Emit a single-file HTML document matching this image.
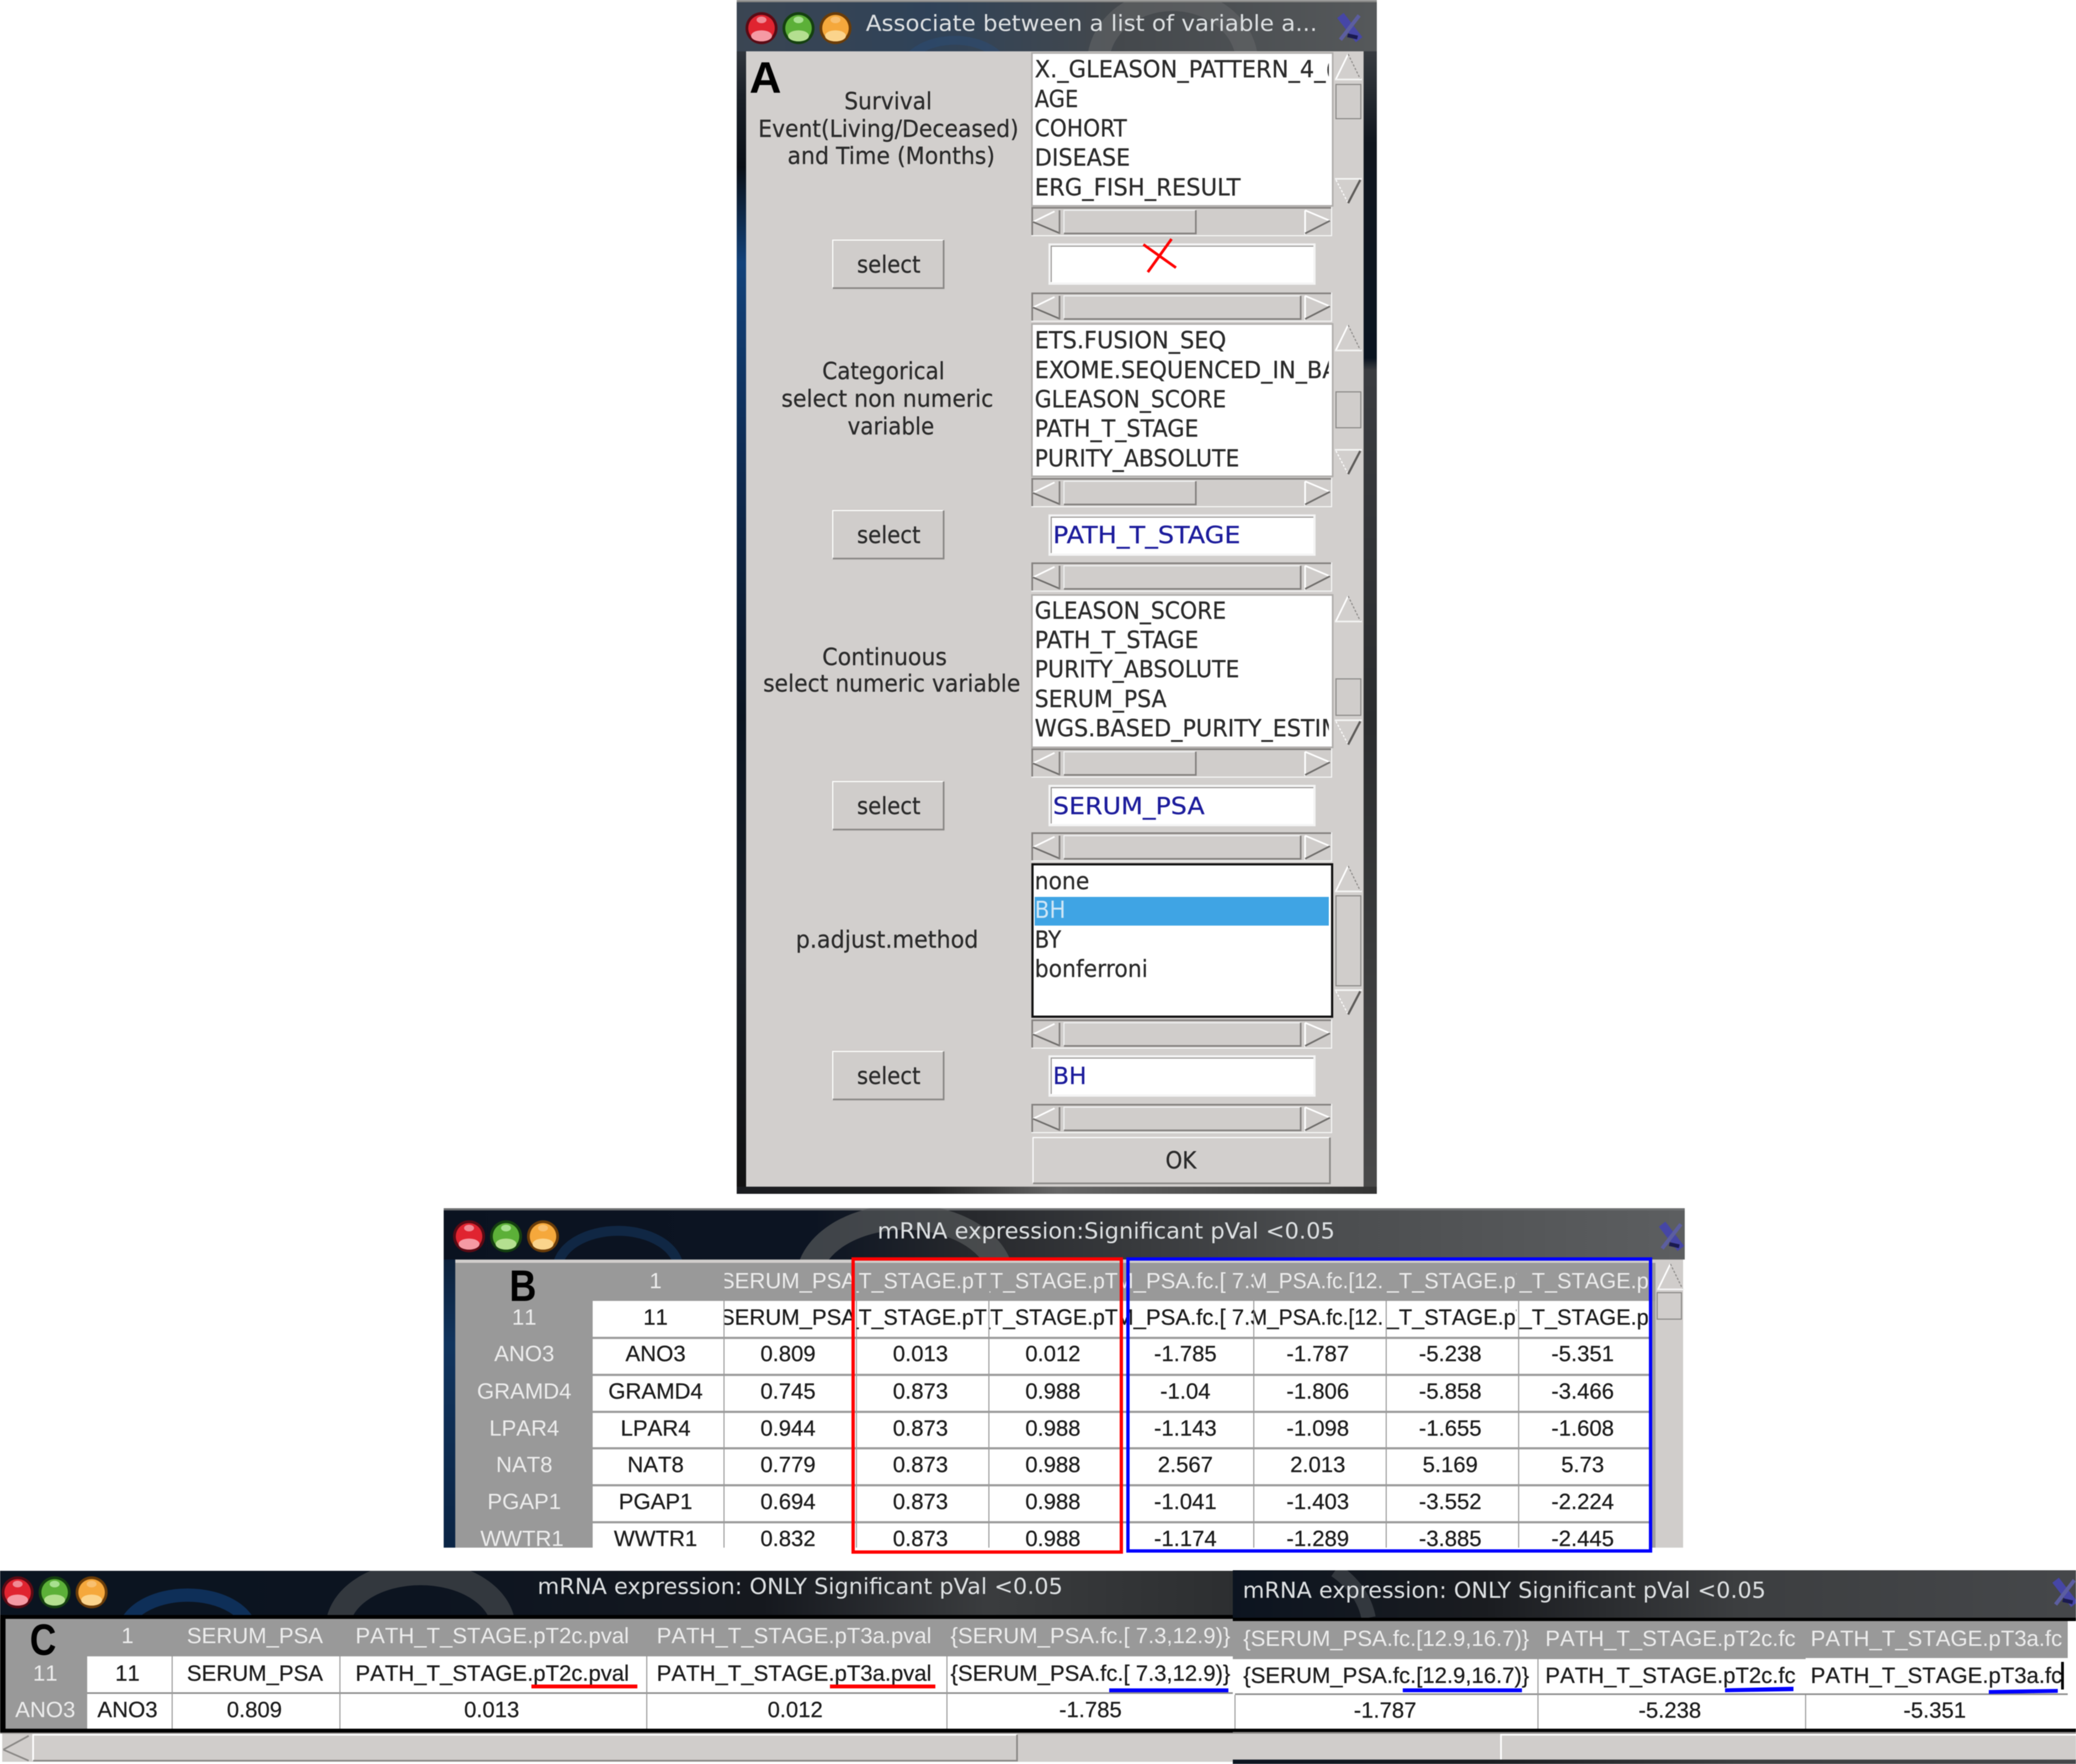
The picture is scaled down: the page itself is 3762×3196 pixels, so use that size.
<!DOCTYPE html>
<html><head><meta charset="utf-8"><title>Associate between a list of variable a...</title>
<style>
html,body{margin:0;padding:0;background:#fff;width:3762px;height:3196px;overflow:hidden}
svg{display:block;filter:blur(.8px)}
.d{font-family:"DejaVu Sans",sans-serif;font-size:43px;fill:#2a2a2a;stroke:#2a2a2a;stroke-width:.4px}
.t{font-family:"DejaVu Sans",sans-serif;font-size:40px;fill:#dde0e2}
.b{font-family:"DejaVu Sans",sans-serif;font-size:43px;fill:#1c1c9c;stroke:#1c1c9c;stroke-width:.4px}
.l{font-family:"Liberation Sans",sans-serif;font-size:40px;fill:#1c1c1c;stroke:#1c1c1c;stroke-width:.4px;text-anchor:middle;font-kerning:none}
.h{font-family:"Liberation Sans",sans-serif;font-size:40px;fill:#ececec;text-anchor:middle;font-kerning:none}
.k{font-family:"Liberation Sans",sans-serif;font-size:80px;font-weight:bold;fill:#000}
</style></head><body>
<svg xmlns="http://www.w3.org/2000/svg" width="3762" height="3196" viewBox="0 0 3762 3196">
<defs>
<linearGradient id="ta" x1="0" x2="1" y1="0" y2="0"><stop offset="0" stop-color="#3a4552"/><stop offset=".3" stop-color="#2f4258"/><stop offset=".6" stop-color="#44484c"/><stop offset="1" stop-color="#55585a"/></linearGradient>
<linearGradient id="tb" x1="0" x2="1" y1="0" y2="0"><stop offset="0" stop-color="#0a1220"/><stop offset=".3" stop-color="#0c1422"/><stop offset=".42" stop-color="#26282c"/><stop offset=".7" stop-color="#4a4c4e"/><stop offset="1" stop-color="#5c5e60"/></linearGradient>
<linearGradient id="tc" x1="0" x2="1" y1="0" y2="0"><stop offset="0" stop-color="#0a1420"/><stop offset=".35" stop-color="#0c1420"/><stop offset=".62" stop-color="#15181e"/><stop offset=".8" stop-color="#3a3c3e"/><stop offset="1" stop-color="#2c2e30"/></linearGradient>
<linearGradient id="td" x1="0" x2="1" y1="0" y2="0"><stop offset="0" stop-color="#0c1420"/><stop offset=".3" stop-color="#1a1c20"/><stop offset=".6" stop-color="#3c3e40"/><stop offset="1" stop-color="#45474a"/></linearGradient>
<linearGradient id="la" x1="0" x2="0" y1="0" y2="1"><stop offset="0" stop-color="#4a4f55"/><stop offset=".08" stop-color="#1a2028"/><stop offset=".14" stop-color="#0a0f16"/><stop offset=".22" stop-color="#12427a"/><stop offset=".38" stop-color="#0e2c54"/><stop offset=".6" stop-color="#0a1420"/><stop offset=".8" stop-color="#1a2028"/><stop offset="1" stop-color="#111"/></linearGradient>
<linearGradient id="ra" x1="0" x2="0" y1="0" y2="1"><stop offset="0" stop-color="#4e5154"/><stop offset=".12" stop-color="#10161e"/><stop offset=".3" stop-color="#0a1420"/><stop offset=".31" stop-color="#3a3c40"/><stop offset=".6" stop-color="#2a2c2e"/><stop offset="1" stop-color="#4a4a4a"/></linearGradient>
<linearGradient id="ba" x1="0" x2="1" y1="0" y2="0"><stop offset="0" stop-color="#1a1c20"/><stop offset=".3" stop-color="#222"/><stop offset=".5" stop-color="#666"/><stop offset="1" stop-color="#333"/></linearGradient>
<linearGradient id="lb" x1="0" x2="0" y1="0" y2="1"><stop offset="0" stop-color="#0a1524"/><stop offset=".4" stop-color="#10345e"/><stop offset="1" stop-color="#0a2444"/></linearGradient>
<g id="lights">
<circle r="29" fill="#5a0a14"/><circle r="24" fill="#e02430"/><ellipse cx="0" cy="14" rx="19" ry="10" fill="#f59aa4"/><ellipse cx="0" cy="-15" rx="9" ry="6" fill="#f08a94"/>
<circle cx="67" r="29" fill="#14400f"/><circle cx="67" r="24" fill="#5cb038"/><ellipse cx="67" cy="14" rx="19" ry="10" fill="#b4df90"/><ellipse cx="67" cy="-15" rx="9" ry="6" fill="#a8e090"/>
<circle cx="134" r="29" fill="#6a3c08"/><circle cx="134" r="24" fill="#f5a83c"/><ellipse cx="134" cy="14" rx="19" ry="10" fill="#fbd48c"/><ellipse cx="134" cy="-15" rx="9" ry="6" fill="#f8c070"/>
</g>
<g id="xi" fill="none"><path d="M-17,-22L17,22" stroke="#4646a6" stroke-width="15"/><path d="M17,-22L-17,22" stroke="#5c5ea0" stroke-width="7"/><path d="M-4,14L14,18" stroke="#1a1a50" stroke-width="7"/></g>
<g id="hb">
<rect width="545" height="53" fill="#d0cdcb"/>
<rect width="545" height="3" fill="#84817f"/><rect width="3" height="53" fill="#84817f"/>
<rect y="51" width="545" height="2" fill="#f6f6f6"/><rect x="543" width="2" height="53" fill="#f6f6f6"/>
<path d="M3,27L42,8" stroke="#fff" stroke-width="3" fill="none"/><path d="M3,27L50,47" stroke="#6f6d6b" stroke-width="3" fill="none"/><path d="M51,6V49" stroke="#84817f" stroke-width="3" fill="none"/>
<path d="M496,6V50" stroke="#fff" stroke-width="3" fill="none"/><path d="M496,6L541,25" stroke="#fff" stroke-width="3" fill="none"/><path d="M541,25L496,48" stroke="#6f6d6b" stroke-width="3" fill="none"/>
</g>
<g id="hs"><use href="#hb"/><path d="M59,48V6H298" stroke="#f2f2f2" stroke-width="2" fill="none"/><path d="M59,48H298V6" stroke="#84817f" stroke-width="3" fill="none"/></g>
<g id="hl"><use href="#hb"/><path d="M59,48V6H488" stroke="#f2f2f2" stroke-width="2" fill="none"/><path d="M59,48H488V6" stroke="#84817f" stroke-width="3" fill="none"/></g>
<g id="ua"><path d="M3,47L25,2" stroke="#fff" stroke-width="3" fill="none"/><path d="M25,2L47,47" stroke="#8a8886" stroke-width="2" stroke-dasharray="4 3" fill="none"/><path d="M1,48H50" stroke="#f4f4f4" stroke-width="3" fill="none"/></g>
<g id="da"><path d="M1,1H50" stroke="#f4f4f4" stroke-width="3" fill="none"/><path d="M3,3L25,45" stroke="#fff" stroke-width="2" stroke-dasharray="4 3" fill="none"/><path d="M47,3L25,45" stroke="#5e5c5a" stroke-width="4" fill="none"/></g>
<g id="sb"><rect x="-3" y="-3" width="207" height="94" fill="#d0cdcb"/><path d="M0,88V0H201" stroke="#fff" stroke-width="2" fill="none"/><path d="M0,87H201V0" stroke="#8a8886" stroke-width="3" fill="none"/><text class="d" x="44" y="59" textLength="115" lengthAdjust="spacingAndGlyphs">select</text></g>
<g id="en"><rect x="-4" y="-4" width="484" height="75" fill="#f4f4f4"/><rect width="476" height="67" fill="#fff"/><path d="M1,66V1H476" stroke="#9a9896" stroke-width="2" fill="none"/></g>
<clipPath id="cl"><rect x="1875" y="90" width="533" height="1780"/></clipPath>
<clipPath id="c0"><rect x="1074" y="2288" width="238" height="516"/></clipPath>
<clipPath id="c1"><rect x="1313" y="2288" width="232" height="516"/></clipPath>
<clipPath id="c2"><rect x="1552" y="2288" width="238" height="516"/></clipPath>
<clipPath id="c3"><rect x="1793" y="2288" width="233" height="516"/></clipPath>
<clipPath id="c4"><rect x="2033" y="2288" width="239" height="516"/></clipPath>
<clipPath id="c5"><rect x="2273" y="2288" width="233" height="516"/></clipPath>
<clipPath id="c6"><rect x="2513" y="2288" width="235" height="516"/></clipPath>
<clipPath id="c7"><rect x="2752" y="2288" width="234" height="516"/></clipPath>
<clipPath id="tbB"><rect x="804" y="2189" width="2249" height="93"/></clipPath>
<clipPath id="tbC"><rect x="0" y="2846" width="2234" height="80"/></clipPath>
<clipPath id="tbD"><rect x="2234" y="2845" width="1528" height="86"/></clipPath>
<clipPath id="tbA"><rect x="1335" y="4" width="1160" height="89"/></clipPath>
</defs>

<!-- WINDOW A -->
<rect x="1335" y="0" width="1160" height="2163" fill="#2a2d30"/>
<rect x="1335" y="0" width="17" height="2163" fill="url(#la)"/>
<rect x="2471" y="0" width="24" height="2163" fill="url(#ra)"/>
<rect x="1335" y="0" width="1160" height="4" fill="#8a8a88"/>
<rect x="1335" y="4" width="1160" height="89" fill="url(#ta)"/>
<g clip-path="url(#tbA)" fill="none">
<ellipse cx="1730" cy="135" rx="95" ry="62" stroke="#2a5080" stroke-width="16" opacity=".4"/>
<ellipse cx="2125" cy="115" rx="135" ry="115" stroke="#66686a" stroke-width="40" opacity=".55"/>
</g>
<use href="#lights" x="1380" y="51"/>
<text class="t" x="1569" y="56" textLength="818" lengthAdjust="spacingAndGlyphs">Associate between a list of variable a...</text>
<use href="#xi" x="2446" y="50"/>
<rect x="1352" y="93" width="1119" height="2057" fill="#d2cfcd"/>
<rect x="1335" y="2150" width="1160" height="13" fill="url(#ba)"/>
<text class="k" x="1358" y="168" textLength="58" lengthAdjust="spacingAndGlyphs">A</text>

<!-- labels -->
<g>
<text class="d" x="1530" y="198" textLength="159" lengthAdjust="spacingAndGlyphs">Survival</text>
<text class="d" x="1374" y="248" textLength="472" lengthAdjust="spacingAndGlyphs">Event(Living/Deceased)</text>
<text class="d" x="1427" y="297" textLength="376" lengthAdjust="spacingAndGlyphs">and Time (Months)</text>
<text class="d" x="1490" y="687" textLength="222" lengthAdjust="spacingAndGlyphs">Categorical</text>
<text class="d" x="1416" y="737" textLength="384" lengthAdjust="spacingAndGlyphs">select non numeric</text>
<text class="d" x="1536" y="787" textLength="157" lengthAdjust="spacingAndGlyphs">variable</text>
<text class="d" x="1490" y="1205" textLength="226" lengthAdjust="spacingAndGlyphs">Continuous</text>
<text class="d" x="1383" y="1253" textLength="466" lengthAdjust="spacingAndGlyphs">select numeric variable</text>
<text class="d" x="1442" y="1717" textLength="331" lengthAdjust="spacingAndGlyphs">p.adjust.method</text>
</g>

<!-- list boxes -->
<rect x="1870" y="96" width="545" height="277" fill="#fff" stroke="#b0aeac" stroke-width="3"/>
<rect x="1870" y="587" width="545" height="276" fill="#fff" stroke="#b0aeac" stroke-width="3"/>
<rect x="1870" y="1078" width="545" height="276" fill="#fff" stroke="#b0aeac" stroke-width="3"/>
<rect x="1871" y="1566" width="543" height="276" fill="#fff" stroke="#111" stroke-width="4"/>
<rect x="1875" y="1625" width="533" height="52" fill="#3fa4e4"/>

<g clip-path="url(#cl)">
<text class="d" x="1875" y="140" textLength="543" lengthAdjust="spacingAndGlyphs">X._GLEASON_PATTERN_4_(</text>
<text class="d" x="1875" y="194" textLength="79" lengthAdjust="spacingAndGlyphs">AGE</text>
<text class="d" x="1875" y="247" textLength="167" lengthAdjust="spacingAndGlyphs">COHORT</text>
<text class="d" x="1875" y="300" textLength="173" lengthAdjust="spacingAndGlyphs">DISEASE</text>
<text class="d" x="1875" y="354" textLength="373" lengthAdjust="spacingAndGlyphs">ERG_FISH_RESULT</text>

<text class="d" x="1875" y="631" textLength="347" lengthAdjust="spacingAndGlyphs">ETS.FUSION_SEQ</text>
<text class="d" x="1875" y="685" textLength="549" lengthAdjust="spacingAndGlyphs">EXOME.SEQUENCED_IN_BA</text>
<text class="d" x="1875" y="738" textLength="347" lengthAdjust="spacingAndGlyphs">GLEASON_SCORE</text>
<text class="d" x="1875" y="791" textLength="297" lengthAdjust="spacingAndGlyphs">PATH_T_STAGE</text>
<text class="d" x="1875" y="845" textLength="371" lengthAdjust="spacingAndGlyphs">PURITY_ABSOLUTE</text>

<text class="d" x="1875" y="1121" textLength="347" lengthAdjust="spacingAndGlyphs">GLEASON_SCORE</text>
<text class="d" x="1875" y="1174" textLength="297" lengthAdjust="spacingAndGlyphs">PATH_T_STAGE</text>
<text class="d" x="1875" y="1227" textLength="371" lengthAdjust="spacingAndGlyphs">PURITY_ABSOLUTE</text>
<text class="d" x="1875" y="1281" textLength="239" lengthAdjust="spacingAndGlyphs">SERUM_PSA</text>
<text class="d" x="1875" y="1334" textLength="554" lengthAdjust="spacingAndGlyphs">WGS.BASED_PURITY_ESTIM</text>

<text class="d" x="1875" y="1611" textLength="99" lengthAdjust="spacingAndGlyphs">none</text>
<text class="d" x="1875" y="1663" textLength="56" lengthAdjust="spacingAndGlyphs" style="fill:#cfe6f6;stroke:none">BH</text>
<text class="d" x="1875" y="1717" textLength="48" lengthAdjust="spacingAndGlyphs">BY</text>
<text class="d" x="1875" y="1770" textLength="205" lengthAdjust="spacingAndGlyphs">bonferroni</text>
</g>

<!-- vertical scrollbars -->
<use href="#ua" x="2418" y="96"/><rect x="2421" y="153" width="45" height="62" fill="#d0cdcb" stroke="#8a8886" stroke-width="2"/><use href="#da" x="2418" y="323"/>
<use href="#ua" x="2418" y="587"/><rect x="2421" y="710" width="45" height="65" fill="#d0cdcb" stroke="#8a8886" stroke-width="2"/><use href="#da" x="2418" y="814"/>
<use href="#ua" x="2418" y="1078"/><rect x="2421" y="1230" width="45" height="66" fill="#d0cdcb" stroke="#8a8886" stroke-width="2"/><use href="#da" x="2418" y="1304"/>
<use href="#ua" x="2418" y="1567"/><rect x="2421" y="1623" width="45" height="163" fill="#d0cdcb" stroke="#8a8886" stroke-width="2"/><use href="#da" x="2418" y="1793"/>

<!-- horizontal scrollbars -->
<use href="#hs" x="1869" y="375"/>
<use href="#hl" x="1869" y="530"/>
<use href="#hs" x="1869" y="866"/>
<use href="#hl" x="1869" y="1019"/>
<use href="#hs" x="1869" y="1356"/>
<use href="#hl" x="1869" y="1508"/>
<use href="#hl" x="1869" y="1847"/>
<use href="#hl" x="1869" y="2000"/>

<!-- buttons -->
<use href="#sb" x="1509" y="435"/>
<use href="#sb" x="1509" y="925"/>
<use href="#sb" x="1509" y="1416"/>
<use href="#sb" x="1509" y="1905"/>
<path d="M1872,2144V2061H2410" stroke="#fff" stroke-width="2" fill="none"/><path d="M1872,2144H2410V2061" stroke="#8a8886" stroke-width="3" fill="none"/>
<text class="d" x="2112" y="2117" textLength="56" lengthAdjust="spacingAndGlyphs">OK</text>

<!-- entries -->
<use href="#en" x="1904" y="445"/>
<use href="#en" x="1904" y="936"/>
<use href="#en" x="1904" y="1426"/>
<use href="#en" x="1904" y="1916"/>
<text class="b" x="1908" y="984" textLength="340" lengthAdjust="spacingAndGlyphs">PATH_T_STAGE</text>
<text class="b" x="1908" y="1475" textLength="275" lengthAdjust="spacingAndGlyphs">SERUM_PSA</text>
<text class="b" x="1908" y="1964" textLength="61" lengthAdjust="spacingAndGlyphs">BH</text>
<path d="M2072,443L2131,485M2123,433L2080,493" stroke="#f00" stroke-width="5" fill="none"/>

<!-- WINDOW B -->
<rect x="804" y="2189" width="249" height="615" fill="url(#lb)"/>
<rect x="804" y="2189" width="2249" height="93" fill="url(#tb)"/>
<rect x="804" y="2189" width="2249" height="4" fill="#6e7072"/>
<g clip-path="url(#tbB)" fill="none">
<ellipse cx="1120" cy="2300" rx="110" ry="70" stroke="#16406e" stroke-width="18" opacity=".45"/>
<ellipse cx="1640" cy="2320" rx="175" ry="115" stroke="#56585a" stroke-width="46" opacity=".7"/>
</g>
<use href="#lights" x="850" y="2240"/>
<text class="t" x="1590" y="2244" textLength="829" lengthAdjust="spacingAndGlyphs">mRNA expression:Significant pVal &lt;0.05</text>
<g clip-path="url(#tbB)"><use href="#xi" x="3029" y="2240"/></g>
<rect x="825" y="2282" width="2225" height="522" fill="#d0cdcb"/>
<rect x="825" y="2288" width="2175" height="69" fill="#999"/>
<rect x="825" y="2288" width="249" height="516" fill="#999"/>
<rect x="1074" y="2357" width="1916" height="447" fill="#fff"/>
<rect x="2990" y="2357" width="10" height="447" fill="#a09f9e"/>
<g fill="#9c9c9c">
<rect x="1074" y="2422" width="1916" height="4"/><rect x="1074" y="2489" width="1916" height="4"/><rect x="1074" y="2556" width="1916" height="4"/><rect x="1074" y="2622" width="1916" height="4"/><rect x="1074" y="2689" width="1916" height="4"/><rect x="1074" y="2756" width="1916" height="4"/>
<rect x="1311" y="2357" width="2" height="447"/><rect x="1551" y="2357" width="2" height="447"/><rect x="1791" y="2357" width="2" height="447"/><rect x="2271" y="2357" width="2" height="447"/><rect x="2511" y="2357" width="2" height="447"/><rect x="2751" y="2357" width="2" height="447"/>
</g>
<use href="#ua" x="3002" y="2288"/>
<rect x="3003" y="2342" width="44" height="48" fill="#d0cdcb" stroke="#8a8886" stroke-width="2"/>

<text class="k" x="923" y="2357" textLength="49" lengthAdjust="spacingAndGlyphs">B</text>
<g>
<text class="h" x="950" y="2400">11</text><text class="h" x="950" y="2466">ANO3</text><text class="h" x="950" y="2534">GRAMD4</text><text class="h" x="950" y="2601">LPAR4</text><text class="h" x="950" y="2667">NAT8</text><text class="h" x="950" y="2734">PGAP1</text><text class="h" x="946" y="2801">WWTR1</text>
</g>
<g clip-path="url(#c0)"><text class="h" x="1188" y="2334">1</text><text class="l" x="1188" y="2400">11</text><text class="l" x="1188" y="2466">ANO3</text><text class="l" x="1188" y="2534">GRAMD4</text><text class="l" x="1188" y="2601">LPAR4</text><text class="l" x="1188" y="2667">NAT8</text><text class="l" x="1188" y="2734">PGAP1</text><text class="l" x="1188" y="2801">WWTR1</text></g>
<g clip-path="url(#c1)"><text class="h" x="1428" y="2334">SERUM_PSA</text><text class="l" x="1428" y="2400">SERUM_PSA</text><text class="l" x="1428" y="2466">0.809</text><text class="l" x="1428" y="2534">0.745</text><text class="l" x="1428" y="2601">0.944</text><text class="l" x="1428" y="2667">0.779</text><text class="l" x="1428" y="2734">0.694</text><text class="l" x="1428" y="2801">0.832</text></g>
<g clip-path="url(#c2)"><text class="h" x="1671" y="2334" textLength="480" lengthAdjust="spacingAndGlyphs">PATH_T_STAGE.pT2c.pval</text><text class="l" x="1671" y="2400" textLength="480" lengthAdjust="spacingAndGlyphs">PATH_T_STAGE.pT2c.pval</text><text class="l" x="1668" y="2466">0.013</text><text class="l" x="1668" y="2534">0.873</text><text class="l" x="1668" y="2601">0.873</text><text class="l" x="1668" y="2667">0.873</text><text class="l" x="1668" y="2734">0.873</text><text class="l" x="1668" y="2801">0.873</text></g>
<g clip-path="url(#c3)"><text class="h" x="1910" y="2334" textLength="480" lengthAdjust="spacingAndGlyphs">PATH_T_STAGE.pT3a.pval</text><text class="l" x="1910" y="2400" textLength="480" lengthAdjust="spacingAndGlyphs">PATH_T_STAGE.pT3a.pval</text><text class="l" x="1908" y="2466">0.012</text><text class="l" x="1908" y="2534">0.988</text><text class="l" x="1908" y="2601">0.988</text><text class="l" x="1908" y="2667">0.988</text><text class="l" x="1908" y="2734">0.988</text><text class="l" x="1908" y="2801">0.988</text></g>
<g clip-path="url(#c4)"><text class="h" x="2150" y="2334">{SERUM_PSA.fc.[ 7.3,12.9)}</text><text class="l" x="2150" y="2400">{SERUM_PSA.fc.[ 7.3,12.9)}</text><text class="l" x="2148" y="2466">-1.785</text><text class="l" x="2148" y="2534">-1.04</text><text class="l" x="2148" y="2601">-1.143</text><text class="l" x="2148" y="2667">2.567</text><text class="l" x="2148" y="2734">-1.041</text><text class="l" x="2148" y="2801">-1.174</text></g>
<g clip-path="url(#c5)"><text class="h" x="2392" y="2334" textLength="490" lengthAdjust="spacingAndGlyphs">{SERUM_PSA.fc.[12.9,16.7)}</text><text class="l" x="2392" y="2400" textLength="490" lengthAdjust="spacingAndGlyphs">{SERUM_PSA.fc.[12.9,16.7)}</text><text class="l" x="2388" y="2466">-1.787</text><text class="l" x="2388" y="2534">-1.806</text><text class="l" x="2388" y="2601">-1.098</text><text class="l" x="2388" y="2667">2.013</text><text class="l" x="2388" y="2734">-1.403</text><text class="l" x="2388" y="2801">-1.289</text></g>
<g clip-path="url(#c6)"><text class="h" x="2631" y="2334" textLength="445" lengthAdjust="spacingAndGlyphs">PATH_T_STAGE.pT2c.fc</text><text class="l" x="2631" y="2400" textLength="445" lengthAdjust="spacingAndGlyphs">PATH_T_STAGE.pT2c.fc</text><text class="l" x="2628" y="2466">-5.238</text><text class="l" x="2628" y="2534">-5.858</text><text class="l" x="2628" y="2601">-1.655</text><text class="l" x="2628" y="2667">5.169</text><text class="l" x="2628" y="2734">-3.552</text><text class="l" x="2628" y="2801">-3.885</text></g>
<g clip-path="url(#c7)"><text class="h" x="2873" y="2334" textLength="448" lengthAdjust="spacingAndGlyphs">PATH_T_STAGE.pT3a.fc</text><text class="l" x="2873" y="2400" textLength="448" lengthAdjust="spacingAndGlyphs">PATH_T_STAGE.pT3a.fc</text><text class="l" x="2868" y="2466">-5.351</text><text class="l" x="2868" y="2534">-3.466</text><text class="l" x="2868" y="2601">-1.608</text><text class="l" x="2868" y="2667">5.73</text><text class="l" x="2868" y="2734">-2.224</text><text class="l" x="2868" y="2801">-2.445</text></g>
<rect x="1546" y="2281" width="486" height="531" fill="none" stroke="#f00" stroke-width="6"/>
<rect x="2044" y="2281" width="947" height="529" fill="none" stroke="#00f" stroke-width="6"/>

<!-- WINDOW C left -->
<rect x="0" y="2846" width="2234" height="80" fill="url(#tc)"/>
<g clip-path="url(#tbC)" fill="none">
<ellipse cx="340" cy="2960" rx="115" ry="70" stroke="#0f3a70" stroke-width="24" opacity=".7"/>
<ellipse cx="762" cy="2950" rx="150" ry="100" stroke="#33383e" stroke-width="44"/>
</g>
<use href="#lights" x="32" y="2885"/>
<text class="t" x="974" y="2888" textLength="952" lengthAdjust="spacingAndGlyphs">mRNA expression: ONLY Significant pVal &lt;0.05</text>
<rect x="0" y="2926" width="2234" height="7" fill="#000"/>
<rect x="0" y="2933" width="10" height="199" fill="#000"/>
<rect x="10" y="2933" width="2224" height="68" fill="#999"/>
<rect x="10" y="2933" width="148" height="199" fill="#999"/>
<rect x="158" y="3001" width="2076" height="131" fill="#fff"/>
<rect x="158" y="3066" width="2076" height="3" fill="#8e8e8e"/>
<g fill="#9c9c9c"><rect x="311" y="3001" width="2" height="131"/><rect x="615" y="3001" width="2" height="131"/><rect x="1171" y="3001" width="2" height="131"/><rect x="1715" y="3001" width="2" height="131"/></g>
<text class="k" x="54" y="2998" textLength="48" lengthAdjust="spacingAndGlyphs">C</text>
<text class="h" x="231" y="2977">1</text><text class="h" x="462" y="2977">SERUM_PSA</text><text class="h" x="892" y="2977">PATH_T_STAGE.pT2c.pval</text><text class="h" x="1439" y="2977">PATH_T_STAGE.pT3a.pval</text><text class="h" x="1976" y="2977">{SERUM_PSA.fc.[ 7.3,12.9)}</text>
<text class="h" x="82" y="3045">11</text><text class="l" x="231" y="3045">11</text><text class="l" x="462" y="3045">SERUM_PSA</text><text class="l" x="892" y="3045">PATH_T_STAGE.pT2c.pval</text><text class="l" x="1439" y="3045">PATH_T_STAGE.pT3a.pval</text><text class="l" x="1976" y="3045">{SERUM_PSA.fc.[ 7.3,12.9)}</text>
<text class="h" x="82" y="3111">ANO3</text><text class="l" x="231" y="3111">ANO3</text><text class="l" x="461" y="3111">0.809</text><text class="l" x="891" y="3111">0.013</text><text class="l" x="1441" y="3111">0.012</text><text class="l" x="1976" y="3111">-1.785</text>
<rect x="0" y="3132" width="2234" height="7" fill="#000"/>
<rect x="0" y="3139" width="2234" height="2" fill="#8a8886"/>
<rect x="4" y="3141" width="2230" height="51" fill="#d0cdcb"/>
<path d="M6,3170L52,3145M6,3170L52,3190" stroke="#8a8886" stroke-width="3" fill="none"/>
<path d="M60,3190V3143H1843" stroke="#fff" stroke-width="3" fill="none"/>
<path d="M60,3190H1843V3143" stroke="#8a8886" stroke-width="3" fill="none"/>
<rect x="963" y="3052" width="192" height="7" fill="#f00"/><rect x="1504" y="3052" width="191" height="7" fill="#f00"/>
<rect x="2010" y="3059" width="216" height="7" fill="#00f"/>

<!-- WINDOW C right -->
<rect x="2234" y="2845" width="1528" height="86" fill="url(#td)"/>
<g clip-path="url(#tbD)" fill="none"><path d="M2420,2845Q2470,2880 2480,2931" stroke="#33383e" stroke-width="26"/></g>
<text class="t" x="2252" y="2895" textLength="948" lengthAdjust="spacingAndGlyphs">mRNA expression: ONLY Significant pVal &lt;0.05</text>
<g clip-path="url(#tbD)"><use href="#xi" x="3742" y="2885"/></g>
<rect x="2234" y="2931" width="1528" height="6" fill="#000"/>
<rect x="2234" y="2937" width="1513" height="69" fill="#999"/>
<rect x="2234" y="3006" width="1513" height="126" fill="#fff"/>
<rect x="3272" y="3004" width="475" height="4" fill="#fff"/>
<rect x="2238" y="3068" width="1509" height="3" fill="#8e8e8e"/>
<g fill="#9c9c9c"><rect x="2237" y="3071" width="2" height="61"/><rect x="2786" y="3006" width="2" height="126"/><rect x="3271" y="3071" width="2" height="61"/></g>
<text class="h" x="2512" y="2982">{SERUM_PSA.fc.[12.9,16.7)}</text><text class="h" x="3027" y="2982">PATH_T_STAGE.pT2c.fc</text><text class="h" x="3509" y="2982">PATH_T_STAGE.pT3a.fc</text>
<text class="l" x="2512" y="3049">{SERUM_PSA.fc.[12.9,16.7)}</text><text class="l" x="3027" y="3049">PATH_T_STAGE.pT2c.fc</text><text class="l" x="3509" y="3049">PATH_T_STAGE.pT3a.fc</text>
<text class="l" x="2510" y="3112">-1.787</text><text class="l" x="3026" y="3112">-5.238</text><text class="l" x="3506" y="3112">-5.351</text>
<rect x="3735" y="3011" width="5" height="50" fill="#000"/>
<rect x="2542" y="3059" width="216" height="7" fill="#00f"/>
<path d="M3126,3059L3250,3056V3064L3126,3066Z" fill="#00f"/>
<path d="M3604,3062L3729,3060V3067L3604,3069Z" fill="#00f"/>
<rect x="2234" y="3132" width="1528" height="6" fill="#000"/>
<rect x="2234" y="3138" width="1528" height="3" fill="#8a8886"/>
<rect x="2234" y="3141" width="1528" height="47" fill="#d0cdcb"/>
<path d="M2720,3188V3143H3762" stroke="#fff" stroke-width="3" fill="none"/>
<rect x="2234" y="3188" width="1528" height="8" fill="url(#td)"/>
</svg>
</body></html>
